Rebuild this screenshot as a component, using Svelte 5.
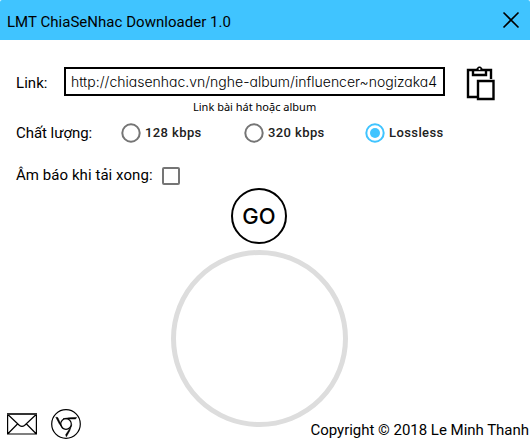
<script>
  let link = $state('http://chiasenhac.vn/nghe-album/influencer~nogizaka4');
  let quality = $state('Lossless');
  let notify = $state(false);
  const options = ['128 kbps', '320 kbps', 'Lossless'];
</script>

<div class="window">
  <header>
    <span class="title">LMT ChiaSeNhac Downloader 1.0</span>
    <svg class="close" width="18" height="18" viewBox="0 0 18 18"><path d="M1.5 1.5 16.5 16.5M16.5 1.5 1.5 16.5" /></svg>
  </header>

  <div class="link-row">
    <span class="label link-label">Link:</span>
    <div class="field"><span class="url">{link}</span></div>
    <svg class="paste" width="30" height="36" viewBox="0 0 30 36">
      <path class="line" d="M11 32H2V5H25V14" />
      <path class="line" d="M7 5V10H20V5" />
      <path d="M10 4C11 4 11 1.5 13.5 1.5S16 4 17 4V6H10Z" />
      <circle cx="13.5" cy="4" r="1" fill="#fff" />
      <path class="line" fill="#fff" d="M12 16H27.5V34H12Z" />
    </svg>
  </div>

  <div class="hint"><span>Link bài hát hoặc album</span></div>

  <div class="quality-row">
    <span class="label quality-label">Chất lượng:</span>
    {#each options as option}
      <button class="option" onclick={() => (quality = option)}>
        <svg width="20" height="20" viewBox="0 0 20 20" class:on={quality === option}>
          <circle class="outer" cx="10" cy="10" r="8.7" />
          {#if quality === option}<circle class="dot" cx="10" cy="10" r="5" />{/if}
        </svg>
        <span class="name">{option}</span>
      </button>
    {/each}
  </div>

  <div class="notify-row">
    <span class="label notify-label">Âm báo khi tải xong:</span>
    <button class="check" aria-label="Âm báo khi tải xong" onclick={() => (notify = !notify)}></button>
  </div>

  <div class="go-row"><button class="go"><span>GO</span></button></div>

  <div class="bottom">
    <div class="contacts">
      <svg class="mail" width="30" height="22" viewBox="0 0 30 22">
        <path d="M.6 1H29.4V21H.6ZM.6 1.3 12.5 12.5Q15 14.3 17.5 12.5L29.4 1.3M.6 21 10.5 11M29.4 21 19.5 11" />
        <path class="top-edge" d="M0 1H30" />
      </svg>
      <svg class="chrome" width="30" height="30" viewBox="0 0 30 30">
        <circle cx="15" cy="15" r="14.3" />
        <circle class="hub" cx="15" cy="15" r="5.3" />
        <path class="blade" d="M12 9.7Q18 8.3 25.6 8.4L24.6 10 16 9.9Z" />
        <path class="blade" d="M4.8 8.2 6.8 8.6Q9 13.5 12 19.6 8 15.5 4.8 8.2Z" />
        <path class="blade" d="M20.8 15.8Q19.5 21.5 15.4 27.8L14.6 25.8 18.8 19.4Z" />
      </svg>
    </div>
    <div class="ring"></div>
    <span class="copyright">Copyright © 2018 Le Minh Thanh</span>
  </div>
</div>

<style>
  :global(body) { margin: 0; background: #fff; }
  .window {
    width: 530px; height: 439px; overflow: hidden;
    display: flex; flex-direction: column;
    background: #fff; color: #000;
    font: 15px/20px Roboto, "Noto Sans", sans-serif;
    white-space: nowrap;
  }
  button { padding: 0; margin: 0; background: none; border: 0; color: inherit; font: inherit; }
  header {
    height: 40px; flex: none; box-sizing: border-box; padding: 0 10px 0 7px;
    display: flex; align-items: center; justify-content: space-between;
    background: #40c4ff; border-radius: 2px 2px 0 0;
  }
  .title { padding-top: 4px; letter-spacing: 0.03px; }
  .close path { stroke: #000; stroke-width: 1.6; fill: none; }
  .link-row { display: flex; align-items: center; height: 36px; margin-top: 25px; padding-left: 16px; }
  .link-label { width: 48px; }
  .label { flex: none; letter-spacing: 0.06px; }
  .field {
    width: 381px; height: 29px; box-sizing: border-box; border: 2px solid #000;
    padding-left: 5px; display: flex; align-items: center; overflow: hidden; margin-top: -3px;
  }
  .url { font: 300 14px/20px Inter, Lato, sans-serif; font-feature-settings: "cv11"; letter-spacing: 0; }
  .paste { margin-left: 21px; }
  .line { stroke: #000; stroke-width: 2.4; }
  .paste .line:not([fill]) { fill: none; }
  .hint { height: 16px; margin-top: -2px; padding-left: 193px; font: 11px/16px "Noto Sans", sans-serif; }
  .quality-row {
    display: grid; grid-template-columns: 105px 123px 121px auto; justify-content: start;
    align-items: center; height: 20px; padding-left: 16px; margin-top: 8px;
  }
  .quality-label { letter-spacing: -0.04px; }
  .option { display: flex; align-items: center; gap: 4px; height: 20px; }
  .outer { stroke: #757575; stroke-width: 2; fill: none; }
  .on .outer { stroke: #40c4ff; }
  .dot { fill: #40c4ff; }
  .name { font: 500 13px/20px Roboto, sans-serif; letter-spacing: 0.4px; color: #212121; }
  .notify-row { display: flex; align-items: center; height: 20px; margin-top: 23px; padding-left: 16px; }
  .notify-label { width: 146px; margin-top: -2px; }
  .check { width: 18px; height: 18px; box-sizing: border-box; border: 2px solid #757575; border-radius: 2px; }
  .go-row { display: flex; justify-content: center; margin-top: 2px; height: 56px; padding-right: 12px; }
  .go {
    width: 56px; height: 56px; box-sizing: border-box; border: 2.5px solid #000; border-radius: 50%;
    font: 500 22px/24px Inter, "Liberation Sans", sans-serif; 
  }
  .bottom { display: grid; grid-template-columns: 171px 177px 182px; height: 189px; margin-top: 6px; }
  .contacts { align-self: end; display: flex; align-items: center; gap: 14px; padding-left: 7px; }
  .contacts svg { display: block; fill: none; stroke: #000; stroke-width: 1.2; }
  .mail .top-edge { stroke: #333; stroke-width: 2; }
  .chrome .hub { stroke-width: 1.2; }
  .chrome .blade { fill: #000; stroke-width: 0.5; }
  .ring { width: 177px; height: 177px; box-sizing: border-box; border: 5px solid #ddd; border-radius: 50%; }
  .copyright { align-self: end; justify-self: end; margin: 0 1px -1px 0; letter-spacing: -0.02px; }
</style>
